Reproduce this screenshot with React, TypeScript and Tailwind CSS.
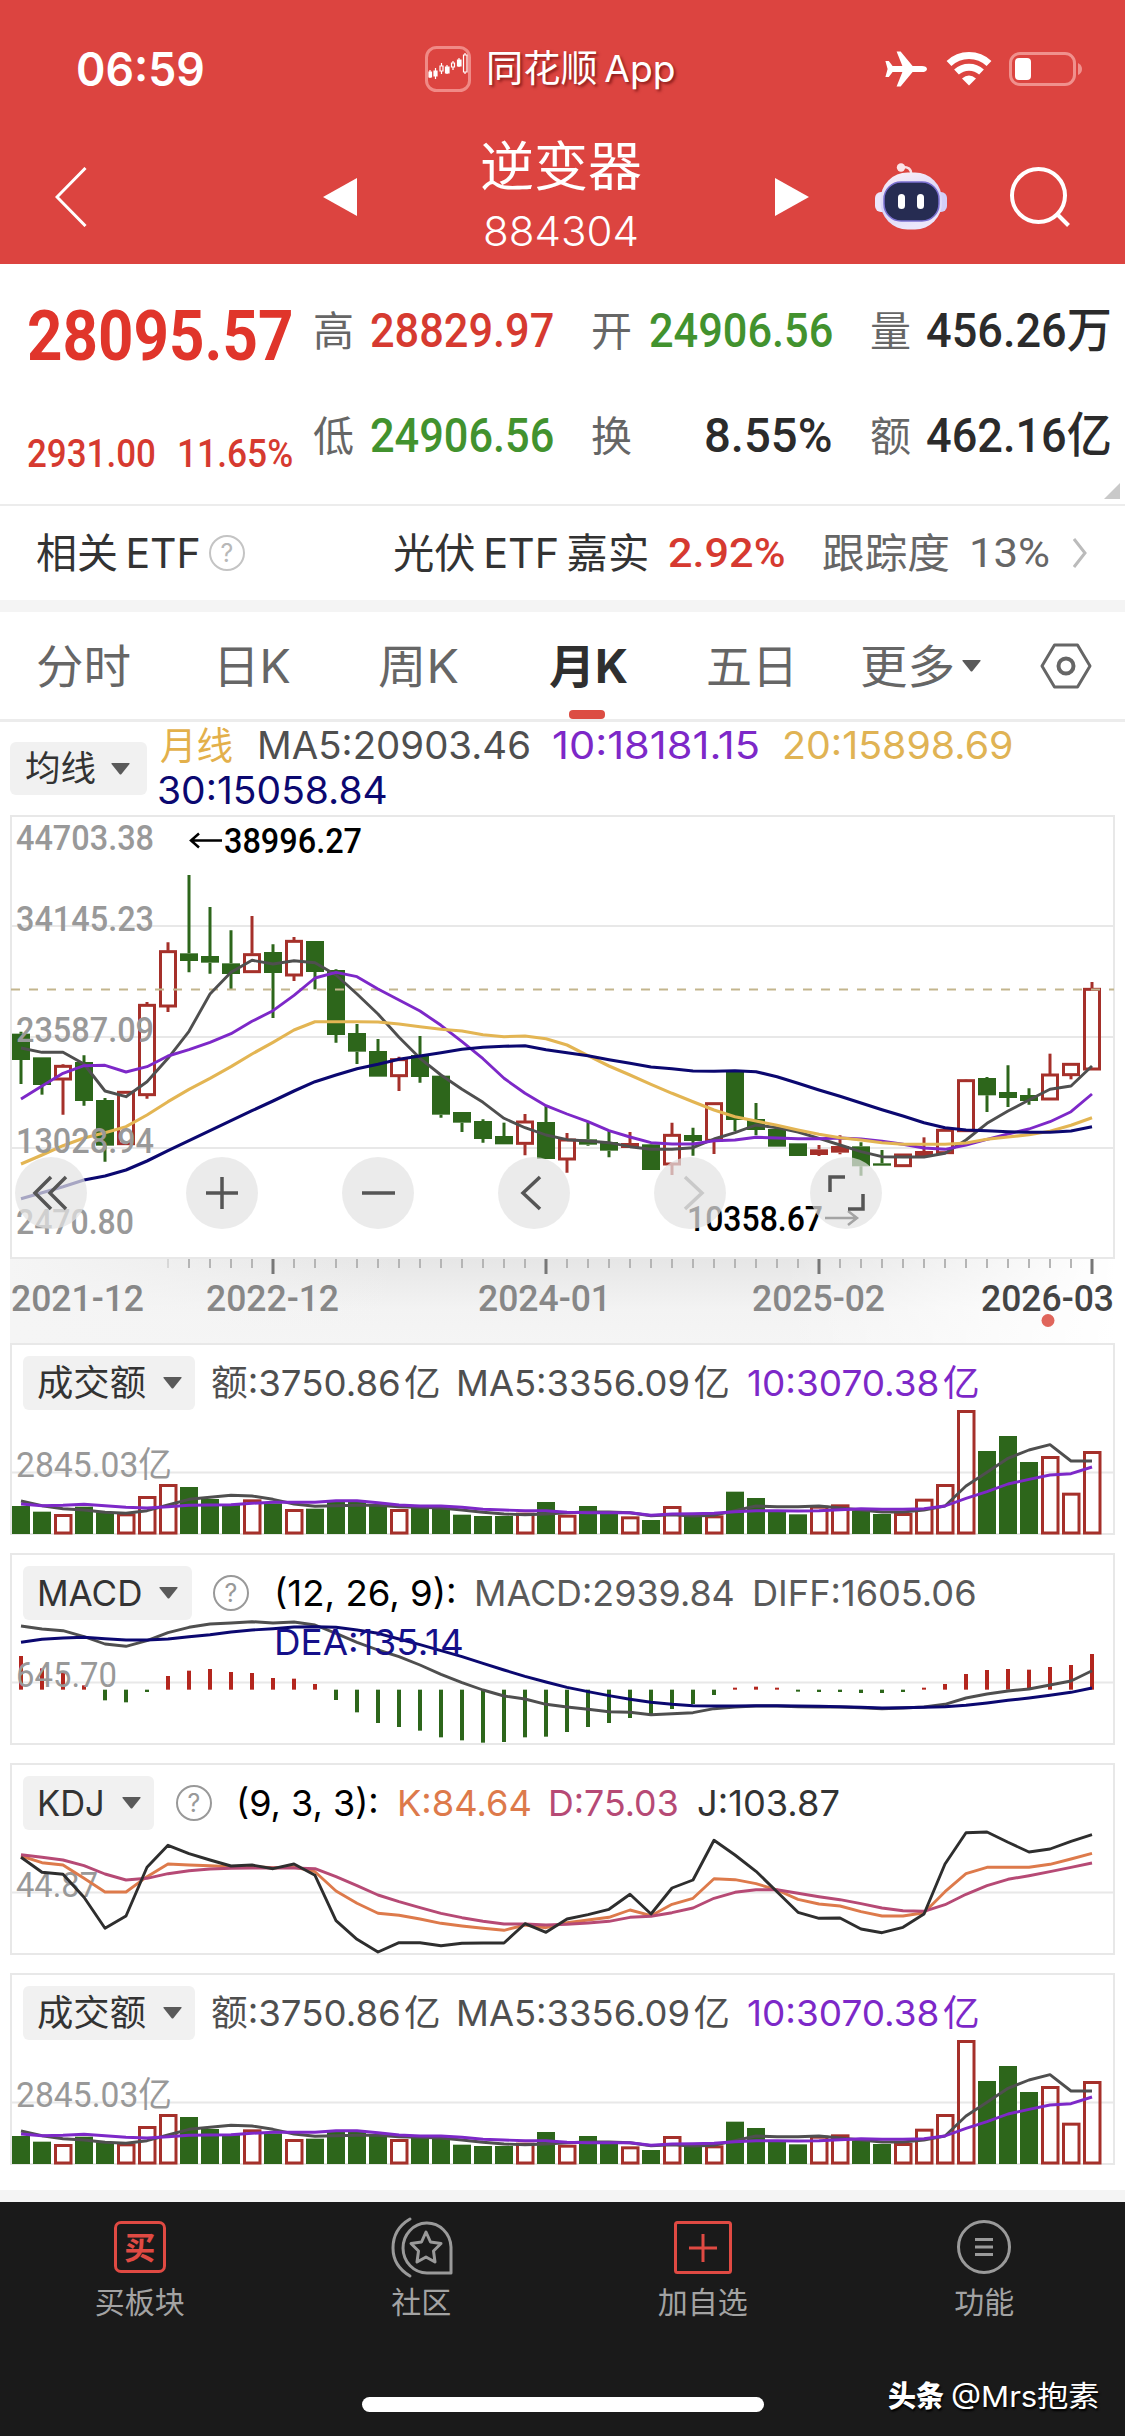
import { useLayoutEffect, useRef, useState } from "react";
import type { ReactNode } from "react";
import clsx from "clsx";

const SANS = "font-[Inter,'Noto_Sans_CJK_SC',sans-serif]";
const DIN = "font-[Roboto,'Noto_Sans_CJK_SC',sans-serif]";

const UP = "#a5302a";
const DOWN = "#2d661b";
const GRAY = "#4f4f4f";
const PURPLE = "#7d28c8";
const YELLOW = "#e3b553";
const NAVY = "#0b0870";

// x centre of the n-th month
const cx = (i: number) => 21 + i * 21;

// All series are stored in thirds of a px, measured from the plot origin.
// [high, top, bottom, low, rising]
type Candle = [number, number, number, number, 0 | 1];

const CANDLES: Candle[] = [
  [665, 671, 750, 822, 0], [742, 742, 825, 854, 0], [763, 766, 810, 914, 1], [736, 756, 873, 887, 0],
  [864, 870, 1007, 1055, 0], [844, 844, 1004, 1004, 1], [576, 583, 857, 866, 1], [397, 422, 591, 606, 1],
  [195, 430, 453, 487, 0], [291, 438, 458, 491, 0], [361, 460, 492, 538, 0], [318, 431, 488, 488, 1],
  [403, 426, 489, 624, 0], [381, 391, 498, 513, 1], [393, 393, 486, 538, 0], [478, 480, 675, 698, 0],
  [642, 669, 725, 762, 0], [687, 723, 800, 800, 0], [740, 746, 800, 843, 1], [678, 735, 801, 818, 0],
  [796, 797, 914, 923, 0], [906, 906, 938, 966, 0], [928, 933, 987, 998, 0], [938, 978, 1003, 1003, 0],
  [912, 933, 1003, 1036, 1], [886, 936, 1047, 1047, 0], [969, 987, 1050, 1088, 1], [935, 988, 1004, 1007, 0],
  [960, 996, 1022, 1042, 0], [966, 999, 1014, 1014, 1], [1002, 1003, 1080, 1080, 0], [938, 973, 1065, 1095, 1],
  [953, 975, 993, 1037, 0], [878, 878, 994, 1032, 1], [782, 783, 930, 964, 0], [879, 927, 960, 976, 0],
  [957, 957, 1010, 1010, 0], [1000, 1000, 1038, 1038, 0], [1005, 1018, 1035, 1038, 1], [976, 1008, 1028, 1033, 1],
  [997, 1009, 1069, 1097, 0], [1020, 1060, 1067, 1067, 0], [1032, 1032, 1070, 1070, 1], [982, 1023, 1041, 1041, 1],
  [956, 958, 1031, 1031, 1], [808, 809, 965, 965, 1], [801, 804, 856, 906, 0], [766, 846, 864, 891, 0],
  [835, 855, 873, 884, 0], [731, 792, 870, 870, 1], [760, 760, 797, 808, 1], [516, 535, 780, 780, 1],
];

const PRICE_MA5 = [
  714, 727, 727, 762, 843, 860, 815, 745, 664, 552, 487, 451, 462, 452, 458, 495, 552, 612, 682, 745, 795, 838, 877, 925, 953, 975,
  989, 993, 998, 1010, 1018, 1018, 1013, 987, 968, 945, 953, 966, 985, 1005, 1025, 1040, 1041, 1041, 1030, 990, 940, 903, 870, 838,
  828, 768,
];
const PRICE_MA10 = [
  867, 828, 790, 767, 766, 786, 770, 738, 719, 697, 671, 634, 602, 556, 504, 487, 500, 537, 570, 603, 646, 695, 746, 805, 850, 887,
  912, 935, 962, 981, 998, 1002, 1002, 992, 990, 982, 984, 986, 986, 984, 987, 994, 1003, 1014, 1018, 1005, 988, 972, 957, 935, 905,
  852,
];
const PRICE_MA20 = [
  1062, 1035, 1007, 984, 968, 950, 915, 875, 838, 805, 770, 732, 697, 660, 635, 635, 635, 636, 642, 650, 658, 663, 674, 680, 678,
  686, 705, 737, 768, 795, 823, 850, 875, 900, 920, 933, 946, 960, 973, 983, 990, 998, 1003, 1003, 1003, 999, 988, 981, 974, 964,
  946, 923,
];
const PRICE_MA30 = [
  1166, 1148, 1130, 1110, 1098, 1080, 1053, 1022, 992, 962, 932, 902, 873, 843, 815, 795, 776, 763, 748, 738, 728, 718, 712, 709,
  707, 719, 728, 737, 749, 760, 771, 776, 783, 784, 782, 785, 800, 820, 840, 859, 879, 899, 918, 938, 953, 960, 962, 965, 967, 967,
  963, 950,
];

const VOLUMES = [
  858, 875, 882, 860, 877, 880, 828, 792, 801, 837, 855, 838, 850, 867, 866, 845, 842, 858, 867, 862, 867, 884, 888, 888, 878, 846,
  884, 858, 882, 889, 900, 858, 888, 886, 815, 834, 875, 883, 857, 853, 872, 882, 879, 836, 792, 570, 693, 648, 726, 708, 818, 693,
];
const VOLUME_UP = [2, 5, 6, 7, 11, 13, 18, 24, 26, 29, 31, 33, 38, 39, 42, 43, 44, 45, 49, 50, 51];
const VOLUME_MA5 = [
  843, 857, 866, 870, 877, 880, 872, 855, 838, 832, 826, 828, 838, 852, 859, 857, 856, 856, 860, 862, 864, 870, 877, 882, 884, 882,
  878, 876, 876, 878, 887, 884, 888, 886, 872, 858, 860, 860, 858, 864, 870, 876, 876, 870, 858, 798, 757, 715, 690, 674, 723, 723,
];
const VOLUME_MA10 = [
  852, 857, 856, 853, 857, 862, 864, 860, 856, 855, 854, 850, 847, 847, 847, 842, 842, 848, 855, 858, 858, 862, 868, 870, 872, 872,
  877, 878, 878, 878, 886, 882, 881, 880, 875, 872, 872, 873, 872, 869, 866, 868, 868, 866, 858, 835, 815, 792, 778, 765, 761, 741,
];

const MACD_ZERO = 449;
const MACD_BARS = [
  348, 385, 395, 436, 481, 487, 456, 408, 392, 387, 396, 399, 414, 416, 432, 480, 517, 549, 561, 572, 592, 601, 608, 606, 592, 590,
  576, 561, 549, 534, 528, 507, 492, 465, 443, 440, 443, 455, 456, 456, 459, 459, 456, 443, 432, 402, 390, 387, 389, 381, 375, 342,
];
const DIFF = [
  258, 267, 272, 290, 312, 319, 302, 278, 262, 252, 249, 245, 249, 246, 255, 280, 307, 330, 350, 375, 403, 428, 450, 468, 477, 493,
  501, 508, 515, 517, 524, 521, 518, 506, 501, 498, 498, 500, 501, 501, 503, 506, 504, 501, 493, 474, 462, 453, 447, 435, 423, 392,
];
const DEA = [
  307, 298, 294, 292, 296, 300, 300, 297, 290, 284, 276, 270, 266, 261, 260, 262, 270, 280, 297, 314, 332, 350, 370, 390, 409, 426,
  442, 455, 467, 478, 487, 493, 497, 498, 498, 497, 497, 498, 499, 500, 502, 504, 503, 502, 500, 496, 489, 481, 474, 466, 457, 444,
];

const KDJ_J = [
  322, 367, 373, 442, 535, 498, 352, 286, 311, 330, 348, 345, 356, 342, 376, 512, 568, 606, 578, 578, 587, 580, 579, 579, 521, 547,
  507, 494, 478, 433, 492, 414, 390, 271, 315, 364, 425, 487, 505, 504, 537, 548, 532, 492, 342, 248, 246, 277, 306, 297, 274, 254,
];
const KDJ_K = [
  318, 338, 345, 385, 426, 426, 380, 342, 345, 347, 350, 350, 353, 351, 365, 423, 460, 490, 496, 507, 520, 528, 535, 541, 525, 533,
  518, 510, 502, 480, 497, 463, 445, 386, 389, 401, 420, 448, 462, 468, 485, 498, 498, 488, 425, 371, 352, 352, 352, 343, 327, 310,
];
const KDJ_D = [
  314, 322, 330, 347, 372, 390, 385, 371, 362, 357, 355, 354, 354, 354, 356, 380, 407, 435, 455, 473, 490, 503, 514, 522, 522, 525,
  523, 519, 514, 502, 499, 488, 474, 445, 427, 419, 419, 430, 440, 449, 461, 474, 482, 484, 464, 433, 407, 388, 377, 365, 352, 339,
];

interface FitProps {
  w: number;
  className?: string;
  children: ReactNode;
}

// Condenses or widens a run of text so that it fills exactly w px.
const Fit = ({ w, className, children }: FitProps) => {
  const ref = useRef<HTMLSpanElement>(null);
  const [scale, setScale] = useState(1);

  useLayoutEffect(() => {
    const natural = ref.current?.offsetWidth ?? 0;
    if (natural > 0) setScale(w / natural);
  }, [w]);

  return (
    <span className={clsx("block shrink-0 leading-none whitespace-nowrap", className)} style={{ width: w }}>
      <span ref={ref} className="inline-block origin-left" style={{ transform: `scaleX(${scale})` }}>
        {children}
      </span>
    </span>
  );
};

interface LineProps {
  data: number[];
  origin: number;
  color: string;
  width?: number;
}

const Line = ({ data, origin, color, width = 2.9 }: LineProps) => (
  <polyline
    points={data.map((v, i) => `${cx(i)},${((v - origin) / 3).toFixed(1)}`).join(" ")}
    fill="none"
    stroke={color}
    strokeWidth={width}
    strokeLinejoin="round"
  />
);

const AxisLabel = ({ y, w, children }: { y: number; w: number; children: ReactNode }) => (
  <text
    x="16"
    y={y}
    textLength={w}
    lengthAdjust="spacingAndGlyphs"
    fill="#999"
    fontSize="35"
    className="font-[Roboto,'Noto_Sans_CJK_SC',sans-serif]"
  >
    {children}
  </text>
);

const Help = ({ className }: { className?: string }) => (
  <span
    className={clsx(
      "flex h-9 w-9 shrink-0 items-center justify-center rounded-full border-[2.5px] text-[25px] leading-none",
      className
    )}
  >
    ?
  </span>
);

const Caret = ({ className }: { className?: string }) => (
  <svg viewBox="0 0 19 12" className={clsx("h-3 w-[19px] shrink-0", className)}>
    <path d="M1 0H18Q19 0 18.5 1L10.5 11Q9.500 12 8.500 11L.5 1Q0 0 1 0Z" fill="#5a5a5a" />
  </svg>
);

const Chip = ({ label, w, className }: { label: string; w: number; className?: string }) => (
  <div className={clsx("flex h-[54px] shrink-0 items-center rounded-md bg-[#f1f1f1] px-[14px] text-[#333]", className)}>
    <Fit w={w} className="text-[36px]">
      {label}
    </Fit>
    <Caret className="ml-[17px]" />
  </div>
);

const StatusBar = () => (
  <div className="flex h-[137px] items-center text-white">
    <Fit w={129} className="ml-[76px] text-[46px] font-semibold">
      06:59
    </Fit>
    <svg viewBox="0 0 46 46" className="ml-[220px] h-[46px] w-[46px]" fill="none">
      <rect x="1.500" y="1.500" width="43" height="43" rx="10" stroke="#f08a86" strokeWidth="3" />
      <g stroke="#fff" strokeWidth="1.200">
        <path d="M5 24V32M10.500 22V33M16.500 17V28M22 19V28M28 15V24M34 12V21M40 7V28" />
        <path d="M15 20H18V25H15ZM26.500 17H29.500V21H26.500ZM38.500 9H42V26H38.500Z" fill="#dc4440" />
        <path d="M4 26H6.500V31H4ZM9 25H12V30H9ZM20.500 21H24V27H20.500ZM32.500 14H36V20H32.500Z" fill="#fff" />
      </g>
    </svg>
    <Fit w={190} className="ml-[15px] text-[37px] [text-shadow:2px_2px_3px_rgba(80,0,0,.6)]">
      同花顺{"\u2009"}App
    </Fit>
    <svg viewBox="0 0 24 24" className="ml-[206px] h-[44px] w-[48px]" preserveAspectRatio="none" fill="#fff">
      <path d="M22.500 12C22.500 11 21.400 10.300 20 10.300H15.300L9.300 2.400H7.300L10.200 10.300H5.300L3.400 7.700H1.700L2.800 12L1.700 16.300H3.400L5.300 13.700H10.200L7.300 21.600H9.300L15.300 13.700H20C21.400 13.700 22.500 13 22.500 12Z" />
    </svg>
    <svg viewBox="0 0 46 34" className="ml-[16px] h-[34px] w-[46px]" fill="none" stroke="#fff" strokeWidth="7">
      <path d="M3 11.500A29 29 0 0 1 43 11.500" />
      <path d="M10.500 20A18.500 18.500 0 0 1 35.500 20" />
      <path d="M23 33.500L16 26.500Q23 20.500 30 26.500Z" fill="#fff" stroke="none" />
    </svg>
    <svg viewBox="0 0 74 34" className="ml-[17px] h-[34px] w-[74px]" fill="none">
      <rect x="1.500" y="1.500" width="64" height="31" rx="9.500" stroke="#f0918d" strokeWidth="3" />
      <path d="M69 11Q73 13 73 17Q73 21 69 23Z" fill="#f0918d" />
      <rect x="6" y="6" width="16" height="22" rx="4" fill="#fff" />
    </svg>
  </div>
);

const Robot = () => (
  <svg viewBox="0 0 72 68" className="ml-[66px] h-[68px] w-[72px]">
    <defs>
      <linearGradient id="shell" x1="0" y1="0" x2="0.300" y2="1">
        <stop offset="0" stopColor="#fdf1f6" />
        <stop offset=".6" stopColor="#d8d4f8" />
        <stop offset="1" stopColor="#ebe6fb" />
      </linearGradient>
    </defs>
    <path d="M36 12Q37 3 26 4" fill="none" stroke="#f7dfe4" strokeWidth="2.500" />
    <circle cx="26" cy="4.500" r="4.200" fill="#fbe4e7" />
    <rect x="0" y="29" width="14" height="20" rx="6" fill="#ece6fb" />
    <rect x="58" y="29" width="14" height="20" rx="6" fill="#d3cff8" />
    <rect x="5.500" y="9.500" width="61.500" height="57" rx="27" fill="url(#shell)" />
    <rect x="9" y="19" width="55" height="39" rx="17" fill="#262c52" stroke="#7a6fd0" strokeWidth="1.500" />
    <rect x="23" y="31" width="7" height="15" rx="3.500" fill="#fff" />
    <rect x="42" y="31" width="7" height="15" rx="3.500" fill="#fff" />
  </svg>
);

const TitleBar = () => (
  <div className="flex h-[120px] items-center text-white">
    <svg viewBox="0 0 32 60" className="ml-[55px] h-[60px] w-8" fill="none" stroke="#fff" strokeWidth="3">
      <path d="M30.500 1L2 30L30.500 59" />
    </svg>
    <svg viewBox="0 0 34 38" className="ml-[236px] h-[38px] w-[34px]" fill="#fff">
      <path d="M34 0V38L0 19Z" />
    </svg>
    <div className="-mt-px ml-[122px] flex w-[164px] flex-col items-center gap-[17px]">
      <Fit w={162} className="text-[53px]">
        逆变器
      </Fit>
      <Fit w={156} className="text-[41px] font-light">
        884304
      </Fit>
    </div>
    <svg viewBox="0 0 34 38" className="ml-[132px] h-[38px] w-[34px]" fill="#fff">
      <path d="M0 0V38L34 19Z" />
    </svg>
    <Robot />
    <svg viewBox="0 0 60 60" className="ml-[63px] h-[60px] w-[60px]" fill="none" stroke="#fff" strokeWidth="4">
      <circle cx="28.500" cy="28.500" r="26.500" />
      <path d="M47 47L58.500 58.500" />
    </svg>
  </div>
);

interface QuoteProps {
  label: string;
  value: string;
  w: number;
  color: string;
}

const Quote = ({ label, value, w, color }: QuoteProps) => (
  <div className="flex items-center justify-between">
    <span className="text-[41px] leading-none text-[#666]">{label}</span>
    <Fit w={w} className={clsx(DIN, "text-[48px] font-medium", color)}>
      {value}
    </Fit>
  </div>
);

const QuotePanel = () => (
  <section className="relative flex h-[242px] border-b-2 border-[#ececec]">
    <div className="flex w-[313px] flex-col pl-[27px]">
      <Fit w={266} className={clsx(DIN, "mt-[37px] text-[70px] font-bold text-[#e0352b]")}>
        28095.57
      </Fit>
      <div className={clsx(DIN, "mt-[64px] flex gap-[21px] text-[39px] font-medium text-[#d63a30]")}>
        <Fit w={129}>2931.00</Fit>
        <Fit w={116}>11.65%</Fit>
      </div>
    </div>
    <div className="mt-[43px] grid h-[153px] grid-cols-[241px_242px_242px] content-between gap-x-[37px]">
      <Quote label="高" value="28829.97" w={184} color="text-[#d63a30]" />
      <Quote label="开" value="24906.56" w={184} color="text-[#42922e]" />
      <Quote label="量" value="456.26万" w={186} color="text-[#2b2b2b]" />
      <Quote label="低" value="24906.56" w={184} color="text-[#42922e]" />
      <Quote label="换" value="8.55%" w={129} color="text-[#2b2b2b]" />
      <Quote label="额" value="462.16亿" w={186} color="text-[#2b2b2b]" />
    </div>
    <svg viewBox="0 0 16 16" className="absolute right-[5px] bottom-[5px] h-4 w-4" fill="#c9c9c9">
      <path d="M16 0V16H0Z" />
    </svg>
  </section>
);

const EtfRow = () => (
  <section className="flex h-[94px] items-center text-[41px] text-[#333]">
    <Fit w={165} className="ml-[36px]">
      相关{"\u2009"}ETF
    </Fit>
    <Help className="ml-[8px] border-[#c4c4c4] text-[#b8b8b8]" />
    <Fit w={256} className="ml-[148px]">
      光伏{"\u2009"}ETF{"\u2009"}嘉实
    </Fit>
    <Fit w={118} className={clsx(DIN, "ml-[19px] font-medium text-[#d63a30]")}>
      2.92%
    </Fit>
    <Fit w={128} className="ml-[36px] text-[#666]">
      跟踪度
    </Fit>
    <Fit w={81} className={clsx(DIN, "ml-[19px] text-[#666]")}>
      13%
    </Fit>
    <svg viewBox="0 0 14 30" className="ml-[23px] h-[30px] w-[14px]" fill="none" stroke="#bbb" strokeWidth="3">
      <path d="M1 1L12 15L1 29" />
    </svg>
  </section>
);

const Tabs = () => (
  <nav className="flex h-[110px] items-center border-b-[3px] border-[#ececec] text-[46px] text-[#666]">
    <Fit w={95} className="ml-[36px]">
      分时
    </Fit>
    <Fit w={78} className="ml-[82px]">
      日K
    </Fit>
    <Fit w={81} className="ml-[87px]">
      周K
    </Fit>
    <div className="relative ml-[90px]">
      <Fit w={79} className="font-bold text-[#2f2f2f]">
        月K
      </Fit>
      <span className="absolute top-[67px] left-[20px] h-[9px] w-[36px] rounded-[4px] bg-[#dc4d43]" />
    </div>
    <Fit w={92} className="ml-[78px]">
      五日
    </Fit>
    <Fit w={95} className="ml-[62px]">
      更多
    </Fit>
    <Caret className="ml-[7px]" />
    <svg viewBox="0 0 52 46" className="ml-[59px] h-[46px] w-[52px]" fill="none" stroke="#666" strokeWidth="3">
      <path d="M14.500 2H37.500L50 23L37.500 44H14.500L2 23Z" strokeLinejoin="round" />
      <circle cx="26" cy="23" r="7.500" strokeWidth="4" />
    </svg>
  </nav>
);

const MaLegend = () => (
  <section className="flex h-[93px]">
    <div className="mt-[20px] ml-[10px] flex h-[53px] w-[137px] items-center rounded-md bg-[#f1f1f1] pl-[15px] text-[#333]">
      <Fit w={71} className="text-[35px]">
        均线
      </Fit>
      <Caret className="ml-[15px]" />
    </div>
    <div className="ml-[10px] flex flex-col gap-[7px] pt-[4px] text-[38px]">
      <div className="flex">
        <Fit w={73} className="ml-[3px] text-[#e3b04b]">
          月线
        </Fit>
        <Fit w={274} className="ml-[24px] text-[#4f4f4f]">
          MA5:20903.46
        </Fit>
        <Fit w={208} className="ml-[21px] text-[#7d28c8]">
          10:18181.15
        </Fit>
        <Fit w={232} className="ml-[22px] text-[#e0b354]">
          20:15898.69
        </Fit>
      </div>
      <Fit w={231} className="text-[#0b0870]">
        30:15058.84
      </Fit>
    </div>
  </section>
);

const py = (v: number) => (v - 15) / 3;

const TICKS = Array.from({ length: 44 }, (_, n) => n + 8);
const MAJOR_TICKS = [12, 25, 38, 51];

const ROUND_ICONS: { d: string; color: string; gap: string }[] = [
  { d: "M36 20L20 36L36 52M51 20L35 36L51 52", color: "#555", gap: "ml-[15px]" },
  { d: "M36 20V52M20 36H52", color: "#555", gap: "ml-[99px]" },
  { d: "M20 36H53", color: "#555", gap: "ml-[84px]" },
  { d: "M42 20L25 36L42 52", color: "#555", gap: "ml-[84px]" },
  { d: "M31 20L48 36L31 52", color: "#c9c9c9", gap: "ml-[84px]" },
  { d: "M20 35V20H35M53 37V52H38", color: "#555", gap: "ml-[84px]" },
];

const PriceChart = () => (
  <section className="relative h-[528px]">
    <svg viewBox="0 0 1125 528" className="block h-[528px] w-[1125px]">
      <defs>
        <linearGradient id="band" x1="0" y1="0" x2="0" y2="1">
          <stop offset="0" stopColor="#e6e6e6" />
          <stop offset=".6" stopColor="#f3f3f3" />
          <stop offset="1" stopColor="#f5f5f5" />
        </linearGradient>
        <linearGradient id="fade" x1="0" y1="0" x2="1" y2="0">
          <stop offset="0" stopColor="#f5f5f5" />
          <stop offset=".35" stopColor="#f5f5f5" stopOpacity="0" />
          <stop offset=".7" stopColor="#fff" stopOpacity="0" />
          <stop offset="1" stopColor="#fff" />
        </linearGradient>
      </defs>
      <rect x="10" y="444" width="1105" height="84" fill="url(#band)" />
      <rect x="10" y="444" width="1105" height="84" fill="url(#fade)" />

      <g stroke="#e8e8e8" strokeWidth="2">
        <rect x="11" y="1" width="1103" height="442" fill="#fff" />
        <path d="M11 111H1114M11 222H1114M11 333H1114" />
      </g>

      {CANDLES.map(([high, top, bottom, low, rising], i) => {
        const color = rising ? UP : DOWN;
        const hollow = rising && bottom - top > 22;
        return (
          <g key={i} stroke={color} strokeWidth="3">
            <path d={`M${cx(i)} ${py(high)}V${py(top)}M${cx(i)} ${py(bottom)}V${py(low)}`} />
            {hollow ? (
              <rect x={cx(i) - 7.5} y={py(top) + 1} width="15" height={py(bottom) - py(top) - 2} fill="none" />
            ) : (
              <rect x={cx(i) - 9} y={py(top)} width="18" height={py(bottom) - py(top)} fill={color} stroke="none" />
            )}
          </g>
        );
      })}

      <path d="M11 174.500H1114" stroke="#c3b58d" strokeWidth="1.800" strokeDasharray="9 9" />

      <Line data={PRICE_MA5} origin={15} color={GRAY} />
      <Line data={PRICE_MA10} origin={15} color={PURPLE} />
      <Line data={PRICE_MA20} origin={15} color={YELLOW} width={3.1} />
      <Line data={PRICE_MA30} origin={15} color={NAVY} width={3.1} />

      <g fontWeight="500">
        <AxisLabel y={35} w={138}>44703.38</AxisLabel>
        <AxisLabel y={116} w={138}>34145.23</AxisLabel>
        <AxisLabel y={227} w={138}>23587.09</AxisLabel>
        <AxisLabel y={338} w={138}>13028.94</AxisLabel>
        <AxisLabel y={419} w={118}>2470.80</AxisLabel>
      </g>
      <g fontSize="35" fontWeight="500" fill="#000" className="font-[Roboto,sans-serif]">
        <path d="M222 25.500H191M199 18.500L191 25.500L199 32.500" fill="none" stroke="#000" strokeWidth="2.500" />
        <text x="224" y="38" textLength="138" lengthAdjust="spacingAndGlyphs">38996.27</text>
        <text x="687" y="416" textLength="136" lengthAdjust="spacingAndGlyphs">10358.67</text>
        <path d="M825 403H857M848 396L857 403L848 410" fill="none" stroke="#000" strokeWidth="2.500" />
      </g>

      <g stroke="#b5b5b5" strokeWidth="2">
        <path d={`M${cx(7)} 444V453`} opacity=".4" />
        {TICKS.map((i) => (
          <path key={i} d={`M${cx(i)} 444V453`} />
        ))}
      </g>
      <g stroke="#777" strokeWidth="3">
        {MAJOR_TICKS.map((i) => (
          <path key={i} d={`M${cx(i)} 444V459`} />
        ))}
      </g>
      <g fontSize="36" fontWeight="500" fill="#878787" className="font-[Roboto,sans-serif]">
        <text x="11" y="496" textLength="133" lengthAdjust="spacingAndGlyphs">2021-12</text>
        <text x="206" y="496" textLength="133" lengthAdjust="spacingAndGlyphs">2022-12</text>
        <text x="478" y="496" textLength="133" lengthAdjust="spacingAndGlyphs">2024-01</text>
        <text x="752" y="496" textLength="133" lengthAdjust="spacingAndGlyphs">2025-02</text>
        <text x="981" y="496" textLength="133" lengthAdjust="spacingAndGlyphs" fill="#444">2026-03</text>
      </g>
      <circle cx="1048" cy="505.500" r="6.500" fill="#e0665c" />
    </svg>

    <div className="absolute top-[342px] left-0 flex">
      {ROUND_ICONS.map(({ d, color, gap }) => (
        <button key={d} className={clsx("h-[72px] w-[72px] rounded-full bg-[#e3e3e3]/72", gap)}>
          <svg viewBox="0 0 72 72" className="h-[72px] w-[72px]" fill="none" stroke={color} strokeWidth="3.500">
            <path d={d} />
          </svg>
        </button>
      ))}
    </div>
  </section>
);

const Frame = () => (
  <path d="M11 1H1114V191H11ZM11 129.500H1114" fill="none" stroke="#e8e8e8" strokeWidth="2" />
);

const VolumePanel = () => (
  <section className="relative h-[192px]">
    <svg viewBox="0 0 1125 192" className="block h-[192px] w-[1125px]">
      <Frame />
      {VOLUMES.map((v, i) => {
        const y = (v - 369) / 3;
        return VOLUME_UP.includes(i) ? (
          <rect key={i} x={cx(i) - 7.5} y={y + 1.5} width="15.500" height={188.5 - y} fill="none" stroke={UP} strokeWidth="3" />
        ) : (
          <rect key={i} x={cx(i) - 9} y={y} width="18" height={191 - y} fill={DOWN} />
        );
      })}
      <Line data={VOLUME_MA5} origin={369} color={GRAY} />
      <Line data={VOLUME_MA10} origin={369} color={PURPLE} />
      <AxisLabel y={134} w={156}>2845.03亿</AxisLabel>
    </svg>
    <div className="absolute top-[13px] left-[23px] flex items-center text-[36px]">
      <Chip label="成交额" w={109} className="w-[172px]" />
      <Fit w={230} className="ml-[16px] text-[#4f4f4f]">
        额:3750.86{"\u200a"}亿
      </Fit>
      <Fit w={274} className="ml-[15px] text-[#4f4f4f]">
        MA5:3356.09{"\u200a"}亿
      </Fit>
      <Fit w={233} className="ml-[17px] text-[#7d28c8]">
        10:3070.38{"\u200a"}亿
      </Fit>
    </div>
  </section>
);

const MacdPanel = () => (
  <section className="relative h-[192px]">
    <svg viewBox="0 0 1125 192" className="block h-[192px] w-[1125px]">
      <Frame />
      {MACD_BARS.map((v, i) => (
        <path
          key={i}
          d={`M${cx(i)} ${(MACD_ZERO - 39) / 3}V${(v - 39) / 3}`}
          stroke={v < MACD_ZERO ? "#b3261e" : DOWN}
          strokeWidth="4"
        />
      ))}
      <AxisLabel y={134} w={101}>645.70</AxisLabel>
      <Line data={DIFF} origin={39} color={GRAY} />
      <Line data={DEA} origin={39} color={NAVY} />
    </svg>
    <div className="absolute top-[13px] left-[23px] flex items-center text-[36px]">
      <Chip label="MACD" w={105} className="w-[169px]" />
      <Help className="ml-[21px] border-[#999] text-[#999]" />
      <Fit w={183} className="ml-[25px] text-black">
        (12, 26, 9):
      </Fit>
      <Fit w={261} className="ml-[17px] text-[#5a5a5a]">
        MACD:2939.84
      </Fit>
      <Fit w={225} className="ml-[17px] text-[#5a5a5a]">
        DIFF:1605.06
      </Fit>
    </div>
    <Fit w={190} className="absolute top-[71px] left-[274px] text-[36px] text-[#15108a]">
      DEA:135.14
    </Fit>
  </section>
);

const KdjPanel = () => (
  <section className="relative h-[192px]">
    <svg viewBox="0 0 1125 192" className="block h-[192px] w-[1125px]">
      <Frame />
      <AxisLabel y={134} w={82}>44.87</AxisLabel>
      <Line data={KDJ_K} origin={39} color="#dd7a4b" />
      <Line data={KDJ_D} origin={39} color="#b64a75" />
      <Line data={KDJ_J} origin={39} color="#2e2e2e" />
    </svg>
    <div className="absolute top-[13px] left-[23px] flex items-center text-[36px]">
      <Chip label="KDJ" w={68} className="w-[131px]" />
      <Help className="ml-[22px] border-[#999] text-[#999]" />
      <Fit w={143} className="ml-[24px] text-black">
        (9, 3, 3):
      </Fit>
      <Fit w={135} className="ml-[18px] text-[#dd7a4b]">
        K:84.64
      </Fit>
      <Fit w={131} className="ml-[16px] text-[#b64a75]">
        D:75.03
      </Fit>
      <Fit w={143} className="ml-[18px] text-[#333]">
        J:103.87
      </Fit>
    </div>
  </section>
);

const NavItem = ({ label, icon }: { label: string; icon: ReactNode }) => (
  <div className="flex flex-1 flex-col items-center pt-[14px]">
    {icon}
    <span className="mt-[7px] text-[30px] leading-none text-[#a3a3a3]">{label}</span>
  </div>
);

const BottomNav = () => (
  <footer className="relative h-[234px] bg-[#1a1a1a]">
    <div className="-ml-px flex">
      <NavItem
        label="买板块"
        icon={
          <span className="my-[5px] mb-[7px] flex h-[52px] w-[52px] items-center justify-center rounded-[7px] border-3 border-[#e04a43] text-[31px] leading-none font-bold text-[#e04a43]">
            买
          </span>
        }
      />
      <NavItem
        label="社区"
        icon={
          <svg viewBox="0 0 64 64" className="h-[64px] w-[64px]" fill="none" stroke="#9a9a9a" strokeWidth="3">
            <path d="M21 3Q4 13 4 32Q4 50 21 60" strokeLinecap="round" />
            <path d="M62 57V31A24 25 0 1 0 38 57Z" strokeLinejoin="round" />
            <path
              d="M37 16L41.500 26L52 27.500L44.500 35L46 46L37 41L28 46L29.500 35L22 27.500L32.500 26Z"
              strokeLinejoin="round"
            />
          </svg>
        }
      />
      <NavItem
        label="加自选"
        icon={
          <svg viewBox="0 0 64 64" className="h-[64px] w-[64px]" fill="none" stroke="#e04a43" strokeWidth="3">
            <rect x="4.500" y="6.500" width="55" height="50" rx="2" />
            <path d="M32 18V46M18 32H46" />
          </svg>
        }
      />
      <NavItem
        label="功能"
        icon={
          <svg viewBox="0 0 64 64" className="h-[64px] w-[64px]" fill="none" stroke="#9a9a9a" strokeWidth="3">
            <circle cx="32" cy="31" r="25.500" />
            <path d="M23 23.500H41M23 31H41M23 38.500H41" />
          </svg>
        }
      />
    </div>
    <div className="absolute top-[195px] left-[362px] h-[15px] w-[402px] rounded-full bg-white" />
    <div className="absolute top-[180px] left-[888px] flex gap-[7px] text-[29px] text-white [text-shadow:1px_2px_2px_#000]">
      <Fit w={56} className="font-black">
        头条
      </Fit>
      <Fit w={148}>@Mrs抱素</Fit>
    </div>
  </footer>
);

export default function App() {
  return (
    <main className={clsx("h-[2436px] w-[1125px] overflow-hidden bg-white", SANS)}>
      <header className="h-[264px] bg-[#dc4440]">
        <StatusBar />
        <TitleBar />
      </header>
      <QuotePanel />
      <EtfRow />
      <div className="h-3 bg-[#f4f4f4]" />
      <Tabs />
      <MaLegend />
      <PriceChart />
      <div className="flex flex-col gap-[18px]">
        <VolumePanel />
        <MacdPanel />
        <KdjPanel />
        <VolumePanel />
      </div>
      <div className="mt-[25px] h-3 bg-[#f4f4f4]" />
      <BottomNav />
    </main>
  );
}
